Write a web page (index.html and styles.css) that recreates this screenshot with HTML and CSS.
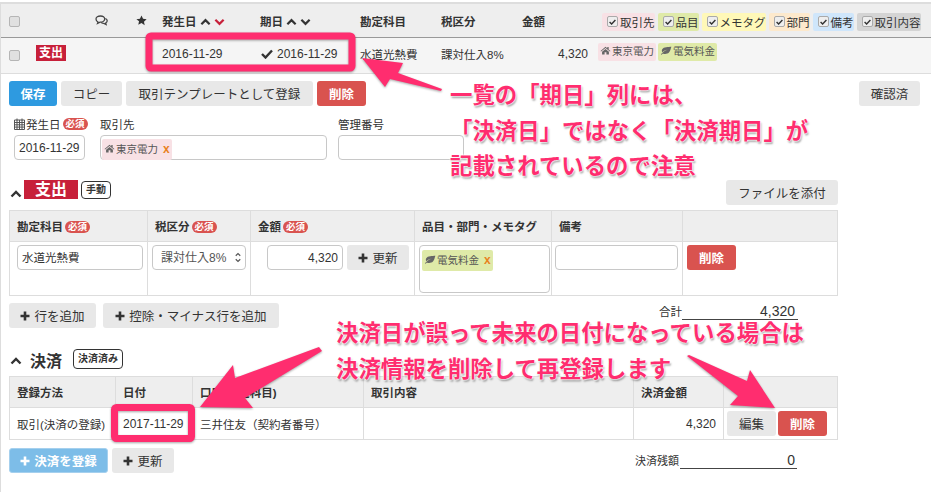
FILE: index.html
```html
<!DOCTYPE html>
<html lang="ja">
<head>
    <meta charset="UTF-8">
    <meta name="viewport" content="width=device-width, initial-scale=1.0">
    <link rel="stylesheet" href="styles.css">
    <title>取引の編集</title>
</head>
<body>

    <svg class="icon-defs" width="0" height="0">
        <symbol id="i-up" viewBox="0 0 12 8"><path d="M1.5 6.5 6 2l4.5 4.5" fill="none" stroke="currentColor" stroke-width="2.4"/></symbol>
        <symbol id="i-down" viewBox="0 0 12 8"><path d="M1.5 1.5 6 6l4.5-4.5" fill="none" stroke="currentColor" stroke-width="2.4"/></symbol>
        <symbol id="i-check" viewBox="0 0 12 10"><path d="M1 5l3.5 3.5L11 1.5" fill="none" stroke="currentColor" stroke-width="2.4"/></symbol>
        <symbol id="i-plus" viewBox="0 0 10 10"><path d="M5 .5v9M.5 5h9" fill="none" stroke="currentColor" stroke-width="2.6"/></symbol>
        <symbol id="i-star" viewBox="0 0 12 12"><path d="M6 .5l1.7 3.6 3.9.5-2.9 2.7.8 3.9L6 8.8l-3.5 1.9.8-3.9L.4 4.6l3.9-.5z" fill="currentColor"/></symbol>
        <symbol id="i-home" viewBox="0 0 12 10"><path d="M6 .8.5 5.5l.6.7L6 2.2l4.9 4 .6-.7L9.500 3.800V1.200H8v1.300zM2.200 6.500V9.500h2.800V7h2v2.500h2.800V6.500L6 3.300z" fill="currentColor"/></symbol>
        <symbol id="i-leaf" viewBox="0 0 13 10"><path d="M12.500 .8C9 1.200 4 .6 2.300 3.600 1.500 5 1.900 6.200 2.500 6.900 4 5.300 6 4.300 8.500 3.800 6 4.800 3 6.500.8 9.300l.8.500 1.400-1.600c2 1 5 .8 6.800-1 1.500-1.500 1.800-4 2.700-6.400z" fill="currentColor"/></symbol>
        <symbol id="i-cal" viewBox="0 0 11 12"><path d="M.5 2h10v9.500H.5zM.5 4.500h10M.5 6.800h10M.5 9.100h10M3 2v9.500M5.500 2v9.500M8 2v9.500M3 .5v2M8 .5v2" fill="none" stroke="currentColor"/></symbol>
        <symbol id="i-comment" viewBox="0 0 13 11"><path d="M5.500 1C3 1 1 2.300 1 4s1 2.500 2 3l-.5 1.500L5 7.200c2.700 0 4.700-1.400 4.700-3.200S8 1 5.500 1zM10.500 3.500c1 .5 1.700 1.300 1.700 2.300 0 1-.6 1.700-1.500 2.200l.4 1.500-2.200-1.100c-1 0-1.800-.2-2.500-.6" fill="none" stroke="currentColor" stroke-width="1.300"/></symbol>
    </svg>

    <div class="page">

        <div class="list-grid list-head">
            <span><span class="box"></span></span>
            <svg class="ic comment"><use href="#i-comment"/></svg>
            <svg class="ic star"><use href="#i-star"/></svg>
            <span class="sort">発生日 <svg class="ic chev"><use href="#i-up"/></svg><svg class="ic chev red"><use href="#i-down"/></svg></span>
            <span class="sort">期日 <svg class="ic chev"><use href="#i-up"/></svg><svg class="ic chev"><use href="#i-down"/></svg></span>
            <span>勘定科目</span>
            <span>税区分</span>
            <span>金額</span>
            <div class="filters">
                <span class="filter pink"><span class="tick"><svg class="ic"><use href="#i-check"/></svg></span>取引先</span>
                <span class="filter green"><span class="tick"><svg class="ic"><use href="#i-check"/></svg></span>品目</span>
                <span class="filter yellow"><span class="tick"><svg class="ic"><use href="#i-check"/></svg></span>メモタグ</span>
                <span class="filter orange"><span class="tick"><svg class="ic"><use href="#i-check"/></svg></span>部門</span>
                <span class="filter blue"><span class="tick"><svg class="ic"><use href="#i-check"/></svg></span>備考</span>
                <span class="filter gray"><span class="tick"><svg class="ic"><use href="#i-check"/></svg></span>取引内容</span>
            </div>
        </div>

        <div class="list-grid list-row">
            <span class="kind-cell"><span class="box"></span><span class="kind">支出</span></span>
            <span></span>
            <span></span>
            <span class="num">2016-11-29</span>
            <span class="due num"><svg class="ic due-check"><use href="#i-check"/></svg>2016-11-29</span>
            <span>水道光熱費</span>
            <span>課対仕入8%</span>
            <span class="amount num">4,320</span>
            <div class="row-tags">
                <span class="tag pink"><svg class="ic tag-ic"><use href="#i-home"/></svg>東京電力</span>
                <span class="tag green"><svg class="ic tag-ic leaf"><use href="#i-leaf"/></svg>電気料金</span>
            </div>
        </div>

        <div class="detail">
            <div class="toolbar">
                <button class="btn primary save">保存</button>
                <button class="btn copy">コピー</button>
                <button class="btn template">取引テンプレートとして登録</button>
                <button class="btn danger">削除</button>
                <button class="btn confirm">確認済</button>
            </div>

            <div class="meta">
                <div class="field f-date">
                    <label><svg class="ic cal"><use href="#i-cal"/></svg>発生日<span class="req">必須</span></label>
                    <div class="input num">2016-11-29</div>
                </div>
                <div class="field f-partner">
                    <label>取引先</label>
                    <div class="input tag-input"><span class="tag pink"><svg class="ic tag-ic"><use href="#i-home"/></svg>東京電力 <b class="x">x</b></span></div>
                </div>
                <div class="field f-number">
                    <label>管理番号</label>
                    <div class="input"></div>
                </div>
            </div>

            <div class="section-head">
                <svg class="ic section-chev"><use href="#i-up"/></svg>
                <span class="section-kind">支出</span>
                <span class="outline">手動</span>
                <button class="btn attach">ファイルを添付</button>
            </div>

            <table class="grid-table lines">
                <colgroup>
                    <col class="c1"><col class="c2"><col class="c3"><col class="c4"><col class="c5"><col>
                </colgroup>
                <tr>
                    <th>勘定科目<span class="req">必須</span></th>
                    <th>税区分<span class="req">必須</span></th>
                    <th>金額<span class="req">必須</span></th>
                    <th>品目・部門・メモタグ</th>
                    <th>備考</th>
                    <th></th>
                </tr>
                <tr>
                    <td><div class="input account">水道光熱費</div></td>
                    <td>
                        <div class="input tax">課対仕入8%
                            <span class="updown"><svg class="ic"><use href="#i-up"/></svg><svg class="ic"><use href="#i-down"/></svg></span>
                        </div>
                    </td>
                    <td>
                        <div class="amount-cell">
                            <div class="input money num">4,320</div>
                            <button class="btn refresh"><svg class="ic plus"><use href="#i-plus"/></svg>更新</button>
                        </div>
                    </td>
                    <td><div class="input tags-box"><span class="tag green"><svg class="ic tag-ic leaf"><use href="#i-leaf"/></svg>電気料金 <b class="x">x</b></span></div></td>
                    <td><div class="input memo"></div></td>
                    <td><button class="btn danger">削除</button></td>
                </tr>
            </table>

            <div class="after-lines">
                <button class="btn add-line"><svg class="ic plus"><use href="#i-plus"/></svg>行を追加</button>
                <button class="btn add-minus"><svg class="ic plus"><use href="#i-plus"/></svg>控除・マイナス行を追加</button>
                <div class="sum total"><span>合計</span><span class="sum-value">4,320</span></div>
            </div>

            <div class="section-head pay-head">
                <svg class="ic section-chev"><use href="#i-up"/></svg>
                <span class="section-title">決済</span>
                <span class="outline">決済済み</span>
            </div>

            <table class="grid-table payments">
                <colgroup>
                    <col class="p1"><col class="p2"><col class="p3"><col class="p4"><col class="p5"><col>
                </colgroup>
                <tr>
                    <th>登録方法</th>
                    <th>日付</th>
                    <th>口座(勘定科目)</th>
                    <th>取引内容</th>
                    <th>決済金額</th>
                    <th></th>
                </tr>
                <tr>
                    <td>取引(決済の登録)</td>
                    <td class="num">2017-11-29</td>
                    <td>三井住友（契約者番号）</td>
                    <td></td>
                    <td class="right num">4,320</td>
                    <td class="pay-actions"><button class="btn edit">編集</button><button class="btn danger">削除</button></td>
                </tr>
            </table>

            <div class="after-pay">
                <button class="btn pay-add"><svg class="ic plus"><use href="#i-plus"/></svg>決済を登録</button>
                <button class="btn refresh"><svg class="ic plus"><use href="#i-plus"/></svg>更新</button>
                <div class="sum balance"><span>決済残額</span><span class="sum-value">0</span></div>
            </div>
        </div>
    </div>

    <!-- annotations drawn on top of the screen -->
    <svg class="marks" width="931" height="492">
        <rect x="149" y="36" width="203" height="32" rx="2"/>
        <rect x="114.500" y="407.500" width="77" height="31" rx="2"/>
        <path d="M362 58 403 63 398 73 442 89 441 91 390 79 385 87z"/>
        <path d="M200 407 233 365 235 378 319 347 322 351 245 398 253 408z"/>
        <path d="M687 356 689 355 747 381 750 370 775 408 730 405 738 396z"/>
    </svg>
    <div class="note note-top">一覧の「期日」列には、<br>「決済日」ではなく「決済期日」が<br>記載されているので注意</div>
    <div class="note note-bottom">決済日が誤って未来の日付になっている場合は<br>決済情報を削除して再登録します</div>

</body>
</html>
```
FILE: styles.css
```css
html, body {
    margin: 0;
    height: 492px;
    overflow: hidden;
}

body {
    position: relative;
    background-color: #fff;
    color: #333;
    font-family: "Liberation Sans", "Noto Sans CJK JP", sans-serif;
    font-size: 11.500px;
}

.num {
    font-size: 12px;
}

.icon-defs {
    position: absolute;
}

.ic {
    display: inline-block;
    width: 12px;
    height: 12px;
}

.page {
    height: 490px;
    margin-top: 2px;
    border-left: 1px solid #ddd;
    box-sizing: border-box;
}

/* list rows */
.list-grid {
    display: grid;
    grid-template-columns: 94px 41px 26px 98px 100px 81px 81px 80px 1fr;
    align-items: center;
}

.list-head {
    height: 33px;
    border-top: 2px solid #ddd;
    border-bottom: 1px solid #999;
    background-color: #eee;
    font-weight: bold;
}

.list-head > span:first-child,
.kind-cell {
    padding-left: 8px;
}

.list-row {
    height: 31px;
    padding-bottom: 4px;
    border-bottom: 1px solid #ddd;
    background-color: #f5f5f5;
}

.box {
    display: inline-block;
    width: 9px;
    height: 9px;
    vertical-align: middle;
    background-color: #e0e0e0;
    border: 1px solid #b5b5b5;
    border-radius: 2px;
}

.comment {
    width: 13px;
    height: 11px;
    color: #444;
}

.star {
    width: 11px;
    height: 11px;
    color: #333;
}

.sort {
    white-space: nowrap;
}

.chev {
    width: 11px;
    height: 8px;
    margin-right: 3px;
    color: #333;
}

.chev.red {
    color: #c7203a;
}

.filters {
    display: flex;
    gap: 3px;
    margin-top: 2px;
    font-weight: normal;
    white-space: nowrap;
}

.filter {
    display: flex;
    align-items: center;
    height: 18px;
    padding: 0 0 0 5px;
    border-radius: 2px;
}

.tick {
    display: flex;
    align-items: center;
    justify-content: center;
    width: 9px;
    height: 9px;
    margin-right: 2px;
    border: 1px solid #aaa;
    border-radius: 2px;
    background-color: #eee;
}

.tick .ic {
    width: 7px;
    height: 6px;
}

.pink { background-color: #f8e1e5; }
.green { background-color: #dfeaa8; }
.yellow { background-color: #fff8b8; }
.orange { background-color: #fde9cc; }
.blue { background-color: #cfe6fb; }
.gray { background-color: #d4d4d4; }

.kind-cell {
    display: flex;
    align-items: center;
}

.kind-cell .box {
    margin-top: 4px;
}

.kind {
    margin-left: 16px;
    margin-top: -2px;
    padding: 0 3px;
    background-color: #c7203a;
    color: #fff;
    font-size: 12px;
    font-weight: bold;
    line-height: 16px;
}

.due {
    display: flex;
    align-items: center;
    margin-left: 1px;
}

.due-check {
    width: 12px;
    height: 10px;
    margin-right: 4px;
}

.amount {
    padding-right: 14px;
    text-align: right;
}

.row-tags {
    display: flex;
    gap: 2px;
    margin-left: -4px;
    margin-top: -3px;
}

.tag {
    display: inline-block;
    height: 18px;
    padding: 0 2px;
    border-radius: 2px;
    color: #555;
    font-size: 10.500px;
    line-height: 16px;
    white-space: nowrap;
}

.tag-ic {
    width: 11px;
    height: 9px;
    margin-right: 1px;
    color: #666;
}

.leaf {
    width: 12px;
}

.x {
    margin-left: 2px;
    color: #e8821e;
    font-size: 12px;
}

/* buttons */
.btn {
    height: 25px;
    padding: 0;
    border: none;
    border-radius: 3px;
    background-color: #e8e8e8;
    color: #333;
    font-family: inherit;
    font-size: 12.500px;
    white-space: nowrap;
}

.btn .plus {
    width: 10px;
    height: 10px;
    margin-right: 4px;
}

.primary {
    background-color: #2e9ae0;
    color: #fff;
    font-weight: bold;
}

.danger {
    width: 49px;
    background-color: #d9534f;
    color: #fff;
    font-weight: bold;
}

/* detail panel */
.detail {
    padding-left: 8px;
}

.toolbar {
    display: flex;
    gap: 4px;
    width: 911px;
    margin-top: 7px;
}

.save { width: 48px; }
.copy { width: 61px; }
.template { width: 187px; }

.confirm {
    width: 61px;
    margin-left: auto;
}

.meta {
    display: flex;
    height: 60px;
    margin-top: 8px;
}

.field label {
    display: flex;
    align-items: center;
    height: 19px;
    margin-bottom: 2px;
    white-space: nowrap;
}

.cal {
    flex: none;
    width: 11px;
    height: 12px;
    margin-right: 1px;
    color: #555;
}

.req {
    display: inline-block;
    margin-left: 2px;
    padding: 0 3px;
    border-radius: 6px;
    background-color: #d9534f;
    color: #fff;
    font-size: 9.500px;
    font-weight: bold;
    line-height: 12px;
    vertical-align: 1px;
}

.input {
    height: 25px;
    padding: 0 4px;
    border: 1px solid #c8c8c8;
    border-radius: 4px;
    background-color: #fff;
    line-height: 24px;
    box-sizing: border-box;
}

.f-date { width: 71px; margin-left: 5px; }
.f-partner { width: 227px; margin-left: 15px; }
.f-number { width: 126px; margin-left: 11px; }

.tag-input {
    padding: 1px;
}

.tag-input .tag,
.tags-box .tag {
    height: 21px;
    line-height: 20px;
}

.section-head {
    display: flex;
    align-items: center;
    width: 829px;
    height: 25px;
    margin-top: 6px;
}

.section-chev {
    width: 12px;
    height: 8px;
    margin: 2px 2px 0 1px;
    color: #333;
}

.section-kind {
    width: 54px;
    margin-bottom: 6px;
    background-color: #c7203a;
    color: #fff;
    font-size: 16px;
    font-weight: bold;
    line-height: 19px;
    text-align: center;
}

.outline {
    margin-bottom: 6px;
    margin-left: 3px;
    padding: 0 4px;
    border: 1px solid #333;
    border-radius: 4px;
    font-size: 10px;
    font-weight: bold;
    line-height: 16px;
}

.attach {
    width: 112px;
    margin-left: auto;
}

.grid-table {
    width: 829px;
    border-collapse: collapse;
    table-layout: fixed;
}

.grid-table th,
.grid-table td {
    padding: 0 7px;
    border: 1px solid #ddd;
    text-align: left;
    white-space: nowrap;
}

.grid-table th {
    height: 30px;
    background-color: #eee;
    font-weight: bold;
}

.lines {
    margin-top: 5px;
}

.lines td {
    height: 48px;
    padding: 3px 4px 2px;
    vertical-align: top;
}

.c1 { width: 138px; }
.c2 { width: 103px; }
.c3 { width: 164px; }
.c4 { width: 137px; }
.c5 { width: 131px; }

.account {
    width: 126px;
    margin-left: 3px;
}

.tax {
    position: relative;
    width: 94px;
    padding-left: 8px;
    color: #555;
    font-size: 12px;
}

.updown {
    position: absolute;
    top: 6px;
    right: 4px;
    display: flex;
    flex-direction: column;
    color: #555;
}

.updown .ic {
    width: 6px;
    height: 5px;
    margin-bottom: 1px;
}

.amount-cell {
    display: flex;
    gap: 4px;
    margin-left: 12px;
}

.money {
    width: 76px;
    text-align: right;
}

.refresh {
    width: 62px;
}

.tags-box {
    width: 131px;
    height: 48px;
    padding: 2px;
}

.memo {
    width: 123px;
    margin-left: -1px;
}

.after-lines {
    position: relative;
    display: flex;
    gap: 7px;
    width: 829px;
    margin-top: 7px;
}

.add-line { width: 87px; }
.add-minus { width: 176px; }

.sum {
    position: absolute;
    display: flex;
    justify-content: space-between;
}

.sum-value {
    flex: 1;
    border-bottom: 1px solid #444;
    text-align: right;
}

.total {
    top: 0;
    left: 650px;
    width: 139px;
    height: 17px;
}

.total .sum-value {
    padding-right: 3px;
    font-size: 14px;
    line-height: 16px;
}

.pay-head {
    margin-top: 19px;
}

.pay-head .outline {
    margin-left: 11px;
    margin-bottom: 2px;
    line-height: 18px;
}

.pay-head .section-chev {
    margin-right: 8px;
}

.section-title {
    font-size: 16px;
    font-weight: bold;
}

.payments {
    margin-top: 4px;
}

.payments td {
    height: 31px;
}

.p1 { width: 106px; }
.p2 { width: 77px; }
.p3 { width: 171px; }
.p4 { width: 270px; }
.p5 { width: 90px; }

.right {
    text-align: right !important;
}

.grid-table .pay-actions {
    padding: 0 3px;
}

.pay-actions {
    font-size: 0;
}

.edit {
    width: 49px;
    margin-right: 2px;
}

.after-pay {
    position: relative;
    display: flex;
    gap: 4px;
    width: 829px;
    margin-top: 8px;
}

.pay-add {
    width: 99px;
    background-color: #7dbde8;
    color: #fff;
    font-weight: bold;
    border: 1px solid #a5d0ee;
}

.balance {
    top: 4px;
    left: 626px;
    width: 162px;
    height: 17px;
    font-size: 11px;
}

.balance .sum-value {
    margin-left: 1px;
    padding-right: 2px;
    font-size: 14px;
}

/* annotations */
.marks {
    position: absolute;
    top: 0;
    left: 0;
    filter: drop-shadow(0 1px 1px rgba(0, 0, 0, 0.35));
}

.marks path {
    fill: #ff2d6f;
}

.marks rect {
    fill: none;
    stroke: #ff2d6f;
    stroke-width: 7;
}

.note {
    position: absolute;
    color: #ff2d6f;
    font-family: "Noto Sans CJK JP", sans-serif;
    font-size: 22.400px;
    font-weight: bold;
    line-height: 35.500px;
    white-space: nowrap;
    text-shadow: 0 0 2px #fff, 0 0 2px #fff, 0 0 2px #fff, 1px 2px 2px rgba(0, 0, 0, 0.4);
}

.note-top {
    top: 76px;
    left: 450px;
}

.note-bottom {
    top: 314px;
    left: 336px;
}
```
